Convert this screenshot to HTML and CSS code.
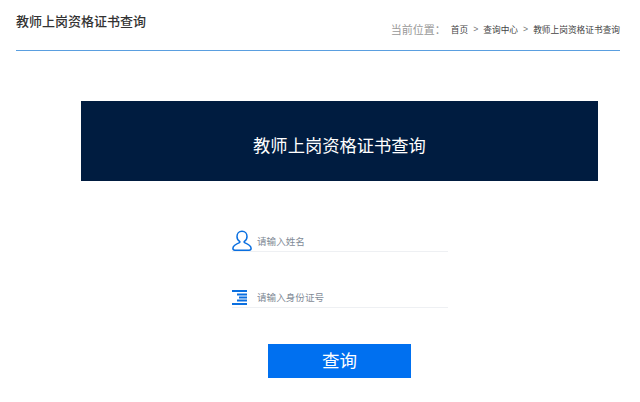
FILE: index.html
```html
<!DOCTYPE html>
<html>
<head>
    <title>教师上岗资格证书查询</title>
    <meta charset="utf-8">
    <meta name="viewport" content="width=device-width, initial-scale=1.0">
    <link rel="stylesheet" href="styles.css">
</head>
<body>
    <div class="page">
        <div class="page-header">
            <h1 class="page-title">教师上岗资格证书查询</h1>
            <div class="crumbs">
                <span class="crumbs-label">当前位置：</span>
                <span>首页</span>
                <span class="crumbs-sep">&gt;</span>
                <span>查询中心</span>
                <span class="crumbs-sep">&gt;</span>
                <span>教师上岗资格证书查询</span>
            </div>
        </div>

        <div class="banner">教师上岗资格证书查询</div>

        <form class="search-form">
            <div class="form-row">
                <svg class="icon" width="20" height="21" viewBox="0 0 20 21" fill="none" stroke="#0a6fe0" stroke-width="1.5">
                    <path d="M10 1.2c-3 0-5 2.300-5 5.200 0 2.200 1 4 2.600 5 .4.300.4 1-.1 1.200C4 14 1 15.500.9 18.300c0 1.100.8 1.900 1.900 1.900h14.400c1.100 0 1.900-.8 1.900-1.900-.1-2.800-3.100-4.300-6.600-5.700-.5-.2-.5-.9-.1-1.200 1.600-1 2.600-2.800 2.600-5 0-2.900-2-5.200-5-5.200z"/>
                </svg>
                <input class="form-input" type="text" placeholder="请输入姓名">
            </div>
            <div class="form-row form-row-id">
                <svg class="icon" width="20" height="15" viewBox="0 0 20 15" fill="#0a6fe0">
                    <rect x="0" y="0" width="15" height="2"/>
                    <rect x="5" y="3.500" width="10" height="2"/>
                    <rect x="7" y="6.500" width="8" height="2"/>
                    <rect x="5" y="9.500" width="10" height="2"/>
                    <rect x="0" y="13" width="15" height="2"/>
                </svg>
                <input class="form-input" type="text" placeholder="请输入身份证号">
            </div>
            <button class="search-btn" type="button">查询</button>
        </form>
    </div>
</body>
</html>
```

FILE: styles.css
```css
body {
    margin: 0;
    background: white;
    font-family: "Liberation Sans", "Noto Sans CJK SC", sans-serif;
}

.page {
    padding: 0 20px 0 16px;
}

.page-header {
    display: flex;
    justify-content: space-between;
    height: 50px;
    border-bottom: 1px solid #5a9fe0;
}

.page-title {
    margin: 13px 0 0;
    font-size: 13px;
    line-height: 18px;
    font-weight: 500;
    color: #333;
}

.crumbs {
    display: flex;
    align-items: center;
    gap: 5px;
    height: 16px;
    margin-top: 21px;
    font-size: 8.7px;
    color: #444;
}

.crumbs-label {
    font-size: 11px;
    color: #999;
}

.crumbs-sep {
    color: #777;
}

.banner {
    display: flex;
    justify-content: center;
    align-items: center;
    width: 517px;
    height: 80px;
    margin: 50px 0 0 65px;
    padding-top: 7px;
    box-sizing: border-box;
    background: #001c40;
    color: white;
    font-size: 17.3px;
}

.search-form {
    display: flex;
    flex-direction: column;
    width: 216px;
    margin: 49px 0 0 216px;
}

.form-row {
    display: flex;
    align-items: flex-end;
    gap: 5px;
    height: 21px;
    border-bottom: 1px solid #eef0f3;
}

.form-row .form-input {
    margin-bottom: 1px;
}

.form-row-id {
    margin-top: 34px;
    padding-bottom: 1px;
    height: 20px;
}

.form-row-id .form-input {
    margin-bottom: 0;
}

.form-row .icon {
    flex: none;
}

.form-row-id .icon {
    margin-bottom: 1px;
}

.form-input {
    flex: 1;
    min-width: 0;
    height: 18px;
    padding: 0;
    border: none;
    outline: none;
    font-family: inherit;
    font-size: 9.6px;
    color: #333;
}

.form-input::placeholder {
    color: #7f8a96;
}

.search-btn {
    align-self: flex-start;
    width: 143px;
    height: 34px;
    margin: 36px 0 0 36px;
    padding: 0 0 3px;
    border: none;
    background: #0070f0;
    color: white;
    font-family: inherit;
    font-size: 17.5px;
    cursor: pointer;
}
```
